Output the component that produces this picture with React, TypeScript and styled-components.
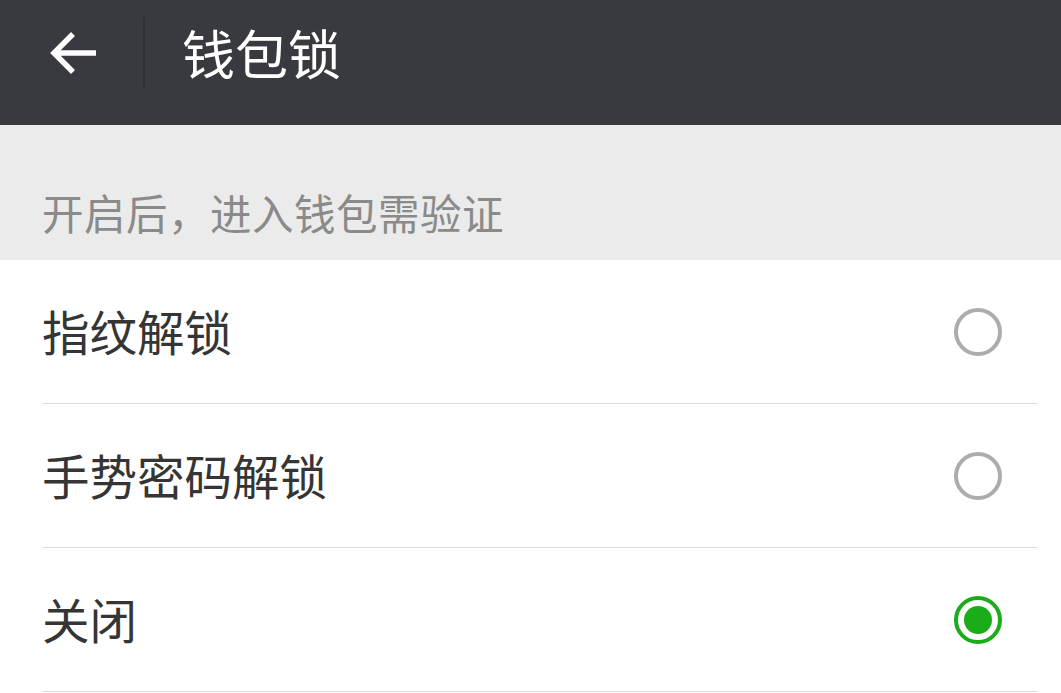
import React, { useState } from "react";
import styled, { createGlobalStyle } from "styled-components";

const GlobalStyle = createGlobalStyle`
  html, body {
    margin: 0;
    padding: 0;
    background: #ffffff;
    font-family: "Noto Sans CJK SC", "Noto Sans", sans-serif;
  }
`;

const Page = styled.div`
  width: 1061px;
  height: 693px;
  overflow: hidden;
  background: #ffffff;
`;

const Header = styled.div`
  height: 125px;
  background: #393a3f;
  display: flex;
  align-items: center;
  padding-bottom: 20px;
  box-sizing: border-box;
`;

const BackButton = styled.div`
  width: 145px;
  height: 71px;
  display: flex;
  align-items: center;
  padding-left: 48px;
  box-sizing: border-box;
  border-right: 2px solid #2d2e32;
`;

const Title = styled.span`
  color: #ffffff;
  font-size: 53px;
  margin-left: 37px;
  margin-top: -2px;
`;

const Notice = styled.div`
  height: 135px;
  background: #ebebeb;
  display: flex;
  align-items: flex-end;
  padding: 0 0 18px 42px;
  box-sizing: border-box;
  color: #8a8a8a;
  font-size: 41.5px;
  letter-spacing: 0.5px;
`;

const List = styled.div`
  background: #ffffff;
`;

const Row = styled.div`
  height: 144px;
  margin-left: 42px;
  margin-right: 23px;
  border-bottom: 1.5px solid #dcdcdc;
  box-sizing: border-box;
  display: flex;
  align-items: center;
  justify-content: space-between;
  cursor: pointer;
`;

const Label = styled.span`
  font-size: 47.5px;
  color: #353535;
  margin-top: -3px;
`;

const Radio = styled.div<{ $checked: boolean }>`
  width: 48px;
  height: 48px;
  border-radius: 50%;
  box-sizing: border-box;
  border: 4px solid ${(p) => (p.$checked ? "#1aad19" : "#acacac")};
  margin-right: 36px;
  display: flex;
  align-items: center;
  justify-content: center;
  &::after {
    content: "";
    display: ${(p) => (p.$checked ? "block" : "none")};
    width: 28px;
    height: 28px;
    border-radius: 50%;
    background: #1aad19;
  }
`;

const BackArrow = () => (
  <svg width="50" height="50" viewBox="0 0 50 50">
    <path
      d="M48 25 H6 M25 6 L6 25 L25 44"
      fill="none"
      stroke="#ffffff"
      strokeWidth="5.5"
      strokeLinecap="butt"
      strokeLinejoin="miter"
    />
  </svg>
);

const options = ["指纹解锁", "手势密码解锁", "关闭"];

export default function App() {
  const [selected, setSelected] = useState(2);

  return (
    <Page>
      <GlobalStyle />
      <Header>
        <BackButton>
          <BackArrow />
        </BackButton>
        <Title>钱包锁</Title>
      </Header>
      <Notice>开启后，进入钱包需验证</Notice>
      <List>
        {options.map((o, i) => (
          <Row key={o} onClick={() => setSelected(i)}>
            <Label>{o}</Label>
            <Radio $checked={selected === i} />
          </Row>
        ))}
      </List>
    </Page>
  );
}
